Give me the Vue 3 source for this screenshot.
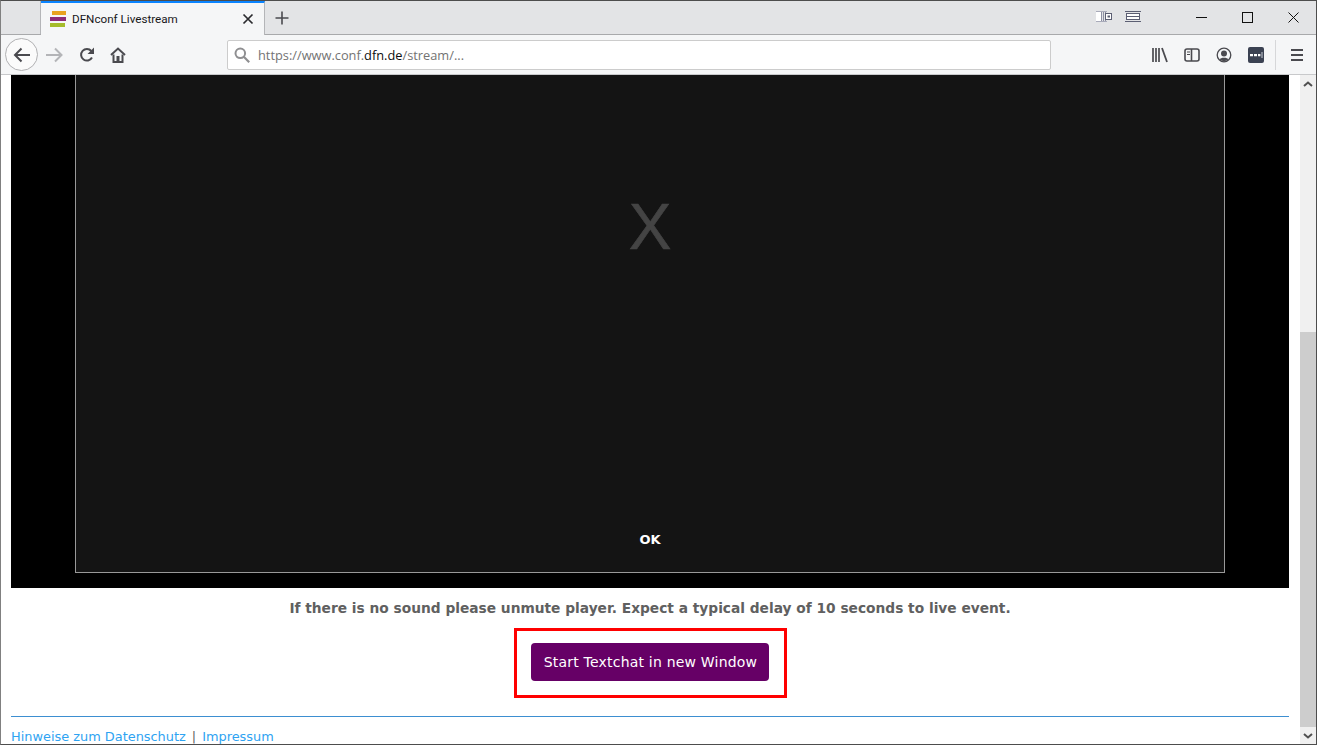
<template>
  <div class="window">
    <!-- tab strip -->
    <header class="tabbar">
      <div class="tab-spacer"></div>
      <div class="tab">
        <svg class="favicon" width="16" height="16" viewBox="0 0 16 16">
          <rect x="2" y="0" width="14" height="4" fill="#e8a220"/>
          <rect x="0" y="6" width="16" height="4" fill="#8c2b78"/>
          <rect x="0" y="12" width="15" height="4" fill="#a5bb2b"/>
        </svg>
        <span class="tab-title">DFNconf Livestream</span>
        <svg class="tab-close" width="12" height="12" viewBox="0 0 12 12">
          <path d="M1.5 1.5l9 9M10.5 1.5l-9 9" stroke="#2b2b2f" stroke-width="1.7" fill="none"/>
        </svg>
      </div>
      <div class="new-tab">
        <svg width="14" height="14" viewBox="0 0 14 14">
          <path d="M7 0.5v13M0.5 7h13" stroke="#4a4a4f" stroke-width="1.6" fill="none"/>
        </svg>
      </div>
      <div class="tray">
        <svg width="16" height="11" viewBox="0 0 16 11">
          <rect x="0" y="0" width="5" height="11" fill="#fff"/>
          <path d="M0 0.5h11M0 10.5h11" stroke="#a9abba"/>
          <path d="M5.5 1v9M7.5 1v9M9.5 1v9" stroke="#8d90a3"/>
          <rect x="9.5" y="2.5" width="6" height="6" fill="#fff" stroke="#5c5f73"/>
          <rect x="11.5" y="4.5" width="2.5" height="2" fill="#5c5f73"/>
        </svg>
        <svg width="16" height="11" viewBox="0 0 16 11">
          <path d="M0 0.5h16M0 10.5h16" stroke="#5c5f73"/>
          <rect x="1.5" y="2.5" width="13" height="6" fill="#fff" stroke="#5c5f73"/>
          <path d="M2 5.5h12" stroke="#5c5f73"/>
        </svg>
      </div>
      <div class="win-controls">
        <button class="win-btn">
          <svg width="11" height="11" viewBox="0 0 11 11"><path d="M0 5.5h11" stroke="#111" fill="none"/></svg>
        </button>
        <button class="win-btn">
          <svg width="11" height="11" viewBox="0 0 11 11"><rect x="0.5" y="0.5" width="10" height="10" stroke="#111" fill="none"/></svg>
        </button>
        <button class="win-btn">
          <svg width="11" height="11" viewBox="0 0 11 11"><path d="M0.5 0.5l10 10M10.5 0.5l-10 10" stroke="#111" fill="none"/></svg>
        </button>
      </div>
    </header>

    <!-- nav toolbar -->
    <nav class="toolbar">
      <div class="back">
        <svg width="18" height="16" viewBox="0 0 18 16">
          <path d="M17 8H2M8.5 1.5L2 8l6.5 6.5" stroke="#4a4a4f" stroke-width="2" fill="none"/>
        </svg>
      </div>
      <svg class="forward" width="17" height="16" viewBox="0 0 17 16">
        <path d="M0 8h15M9 1.5L15.5 8 9 14.5" stroke="#b4b5b8" stroke-width="2" fill="none"/>
      </svg>
      <svg class="reload" width="16" height="16" viewBox="0 0 16 16">
        <path d="M13 10.5A5.8 5.8 0 1 1 12.3 4" stroke="#4a4a4f" stroke-width="2" fill="none"/>
        <path d="M15 0.5v6.5H8.5z" fill="#4a4a4f"/>
      </svg>
      <svg class="home" width="16" height="16" viewBox="0 0 16 16">
        <path d="M1 8l7-6.5L15 8" stroke="#4a4a4f" stroke-width="2" fill="none"/>
        <path d="M3.5 7.5V15h9V7.5" stroke="#4a4a4f" stroke-width="2" fill="none"/>
        <rect x="6.5" y="9" width="3" height="6" fill="#4a4a4f"/>
      </svg>
      <div class="urlbar">
        <svg width="16" height="16" viewBox="0 0 16 16">
          <circle cx="6.3" cy="6.3" r="4.8" stroke="#8f8f91" stroke-width="2" fill="none"/>
          <path d="M9.8 9.8l5.4 5.4" stroke="#8f8f91" stroke-width="2.2" fill="none"/>
        </svg>
        <span class="url">https://www.conf.<b>dfn.de</b>/stream/...</span>
      </div>
      <div class="tool-icons">
        <svg width="16" height="16" viewBox="0 0 16 16">
          <path d="M1 1v14M4 1v14M7 1v14" stroke="#4a4a4f" stroke-width="1.7" fill="none"/>
          <path d="M10 1l5 14" stroke="#4a4a4f" stroke-width="1.8" fill="none"/>
        </svg>
        <svg width="16" height="16" viewBox="0 0 16 16">
          <rect x="1" y="2" width="14" height="12" rx="2" stroke="#4a4a4f" stroke-width="1.6" fill="none"/>
          <path d="M7.5 2v12" stroke="#4a4a4f" stroke-width="1.6"/>
          <path d="M3 5h3M3 7.5h3" stroke="#4a4a4f"/>
        </svg>
        <svg width="16" height="16" viewBox="0 0 16 16">
          <circle cx="8" cy="8" r="6.8" stroke="#4a4a4f" stroke-width="1.3" fill="none"/>
          <circle cx="8" cy="6.5" r="3" fill="#4a4a4f"/>
          <path d="M3.5 12.5c1-2.5 8-2.5 9 0L8 14.5z" fill="#4a4a4f"/>
        </svg>
        <svg width="16" height="16" viewBox="0 0 16 16">
          <rect width="16" height="16" rx="2" fill="#3b4252"/>
          <path d="M2 7h3v2.2H2zM6 7h3v2.2H6zM10 7h2.4v2.2H10z" fill="#fff"/>
          <path d="M14 5v6" stroke="#c8ccd4"/>
        </svg>
      </div>
      <div class="menu-sep"></div>
      <svg class="menu" width="14" height="14" viewBox="0 0 14 14">
        <path d="M1 2h12M1 7h12M1 12h12" stroke="#4a4a4f" stroke-width="2" fill="none"/>
      </svg>
    </nav>

    <!-- page -->
    <div class="viewport">
      <main class="page">
        <section class="player">
          <div class="overlay">
            <div class="big-x">X</div>
            <div class="ok">OK</div>
          </div>
        </section>
        <p class="notice">If there is no sound please unmute player. Expect a typical delay of 10 seconds to live event.</p>
        <div class="chat-row">
          <div class="highlight">
            <a href="#" class="chat-btn">Start Textchat in new Window</a>
          </div>
        </div>
        <footer class="page-footer">
          <a href="#">Hinweise zum Datenschutz</a><span class="pipe">|</span><a href="#">Impressum</a>
        </footer>
      </main>
      <aside class="scrollbar">
        <div class="arrow">
          <svg width="10" height="6" viewBox="0 0 10 6"><path d="M1 5l4-3.5L9 5" stroke="#505050" stroke-width="2" fill="none"/></svg>
        </div>
        <div class="track"><div class="thumb"></div></div>
        <div class="arrow">
          <svg width="10" height="6" viewBox="0 0 10 6"><path d="M1 1l4 3.5L9 1" stroke="#505050" stroke-width="2" fill="none"/></svg>
        </div>
      </aside>
    </div>
  </div>
</template>

<script setup>
</script>

<style>
html, body {
  margin: 0;
  overflow: hidden;
}
</style>

<style scoped>
.window {
  height: 745px;
  box-sizing: border-box;
  display: flex;
  flex-direction: column;
  border: 1px solid #4d4d4d;
  border-left-color: #808080;
  overflow: hidden;
  background: #fff;
}

.tabbar {
  display: flex;
  align-items: stretch;
  height: 33px;
  flex: none;
  background: #e3e4e6;
  border-bottom: 1px solid #a8a9ab;
}

.tab-spacer {
  width: 39px;
  border-right: 1px solid #b4b5b8;
}

.tab {
  width: 224px;
  box-sizing: border-box;
  margin-bottom: -1px;
  display: flex;
  align-items: center;
  padding: 0 10px 1px 9px;
  background: #f5f6f7;
  border-top: 2px solid #0a84ff;
  border-right: 1px solid #b4b5b8;
  font-family: Roboto, "Open Sans", sans-serif;
  font-size: 11.67px;
  color: #18181a;
}

.tab-title {
  margin-left: 6px;
  flex: 1;
}

.new-tab {
  width: 33px;
  display: flex;
  align-items: center;
  justify-content: center;
}

.tray {
  margin-left: auto;
  margin-right: 37px;
  margin-bottom: 3px;
  display: flex;
  align-items: center;
  gap: 13px;
}

.win-controls {
  display: flex;
}

.win-btn {
  width: 46px;
  padding: 0;
  border: none;
  background: none;
  display: flex;
  align-items: center;
  justify-content: center;
}

.toolbar {
  display: flex;
  align-items: center;
  height: 39px;
  flex: none;
  background: #f5f6f7;
  border-bottom: 1px solid #c8c9cb;
}

.back {
  width: 33px;
  height: 33px;
  box-sizing: border-box;
  margin-left: 4px;
  border: 1px solid #b1b1b3;
  border-radius: 50%;
  background: #fbfbfb;
  display: flex;
  align-items: center;
  justify-content: center;
}

.forward {
  margin-left: 8px;
}

.reload {
  margin-left: 16px;
}

.home {
  margin-left: 15px;
}

.urlbar {
  width: 824px;
  height: 30px;
  box-sizing: border-box;
  margin-left: 101px;
  display: flex;
  align-items: center;
  gap: 8px;
  padding-left: 6px;
  background: #fff;
  border: 1px solid #ccc;
  border-radius: 2px;
  font-family: "Open Sans", "Noto Sans", sans-serif;
  font-size: 12.8px;
  color: #737373;
}

.url b {
  font-weight: 400;
  color: #0c0c0d;
}

.tool-icons {
  display: flex;
  align-items: center;
  gap: 16px;
  margin-left: 101px;
}

.menu-sep {
  width: 1px;
  height: 30px;
  margin-left: 11px;
  background: #d6d7d9;
}

.menu {
  margin-left: 14px;
}

.viewport {
  flex: 1;
  min-height: 0;
  display: flex;
}

.page {
  flex: 1;
  min-width: 0;
  padding: 0 11px 0 10px;
  font-family: "DejaVu Sans", Verdana, sans-serif;
  font-size: 14px;
  color: #606060;
}

.player {
  height: 513px;
  background: #000;
  padding: 0 64px 15px;
  box-sizing: border-box;
  display: flex;
}

.overlay {
  flex: 1;
  box-sizing: border-box;
  background: #141414;
  border: 1px solid #999;
  border-top: none;
  display: flex;
  flex-direction: column;
  align-items: center;
  font-family: "Liberation Sans", Arial, sans-serif;
}

.big-x {
  margin-top: 110px;
  font-size: 64px;
  line-height: 84px;
  color: #444;
  -webkit-text-stroke: 0.6px #444;
}

.ok {
  margin-top: auto;
  margin-bottom: 25px;
  font-family: "DejaVu Sans", Verdana, sans-serif;
  font-size: 13px;
  font-weight: 700;
  color: #fff;
}

.notice {
  margin: 12px 0 0;
  text-align: center;
  font-size: 13.75px;
  line-height: 17px;
  font-weight: 700;
}

.chat-row {
  display: flex;
  justify-content: center;
  margin-top: 11px;
  padding-left: 1px;
}

.highlight {
  border: 3px solid #f00;
  padding: 12px 15px 14px 14px;
}

.chat-btn {
  display: block;
  padding: 0 12px 0 13px;
  line-height: 38px;
  border-radius: 4px;
  background: #660066;
  color: #fff;
  letter-spacing: 0.2px;
  text-decoration: none;
}

.page-footer {
  margin-top: 18px;
  padding-top: 12px;
  border-top: 1px solid #3d8fd1;
  font-size: 12.9px;
  line-height: 16px;
  white-space: nowrap;
}

.page-footer a {
  color: #2ea3f2;
  text-decoration: none;
}

.pipe {
  margin: 0 6px;
}

.scrollbar {
  width: 16px;
  flex: none;
  display: flex;
  flex-direction: column;
  background: #f0f0f0;
}

.arrow {
  height: 17px;
  flex: none;
  display: flex;
  align-items: center;
  justify-content: center;
}

.track {
  flex: 1;
  display: flex;
  flex-direction: column;
  justify-content: flex-end;
}

.thumb {
  height: 395px;
  background: #cdcdcd;
}
</style>
